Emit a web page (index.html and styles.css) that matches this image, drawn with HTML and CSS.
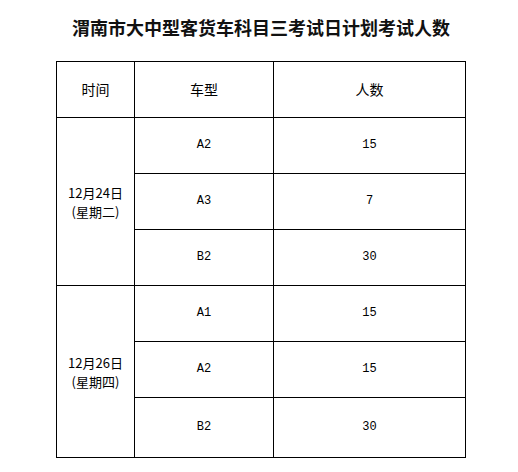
FILE: index.html
```html
<!DOCTYPE html>
<html>
<head>
<meta charset="utf-8">
<link rel="stylesheet" href="styles.css">
</head>
<body>
<div class="page">
  <h1 class="title">渭南市大中型客货车科目三考试日计划考试人数</h1>
  <table class="plan">
    <colgroup>
      <col class="c-time">
      <col class="c-type">
      <col class="c-num">
    </colgroup>
    <tr class="row">
      <td class="cjk">时间</td>
      <td class="cjk">车型</td>
      <td class="cjk">人数</td>
    </tr>
    <tr class="row">
      <td class="date" rowspan="3">12月24日<br>(星期二)</td>
      <td class="lat">A2</td>
      <td class="lat">15</td>
    </tr>
    <tr class="row">
      <td class="lat">A3</td>
      <td class="lat">7</td>
    </tr>
    <tr class="row">
      <td class="lat">B2</td>
      <td class="lat">30</td>
    </tr>
    <tr class="row">
      <td class="date" rowspan="3">12月26日<br>(星期四)</td>
      <td class="lat">A1</td>
      <td class="lat">15</td>
    </tr>
    <tr class="row">
      <td class="lat">A2</td>
      <td class="lat">15</td>
    </tr>
    <tr class="row last">
      <td class="lat">B2</td>
      <td class="lat">30</td>
    </tr>
  </table>
</div>
</body>
</html>
```

FILE: styles.css
```css
html, body {
  margin: 0;
  padding: 0;
  background: #fff;
}
.page {
  width: 518px;
  height: 472px;
  overflow: hidden;
  font-family: "Noto Sans CJK SC", sans-serif;
  color: #000;
}
.title {
  margin: 0;
  padding: 15px 0 0 4px;
  height: 24px;
  line-height: 24px;
  font-size: 18px;
  font-weight: bold;
  text-align: center;
  color: #111;
}
.plan {
  margin: 22px 0 0 56px;
  border-collapse: collapse;
  table-layout: fixed;
  width: 409px;
}
.c-time { width: 78px; }
.c-type { width: 139px; }
.c-num { width: 192px; }
.plan td {
  border: 1px solid #000;
  padding: 0;
  height: 55px;
  text-align: center;
  vertical-align: middle;
  font-size: 14px;
  line-height: 17px;
}
.plan .last td {
  height: 59px;
}
.plan td.lat {
  font-family: "Liberation Mono", monospace;
  font-size: 12px;
}
.plan td.date {
  font-size: 13px;
  line-height: 19px;
}
```
